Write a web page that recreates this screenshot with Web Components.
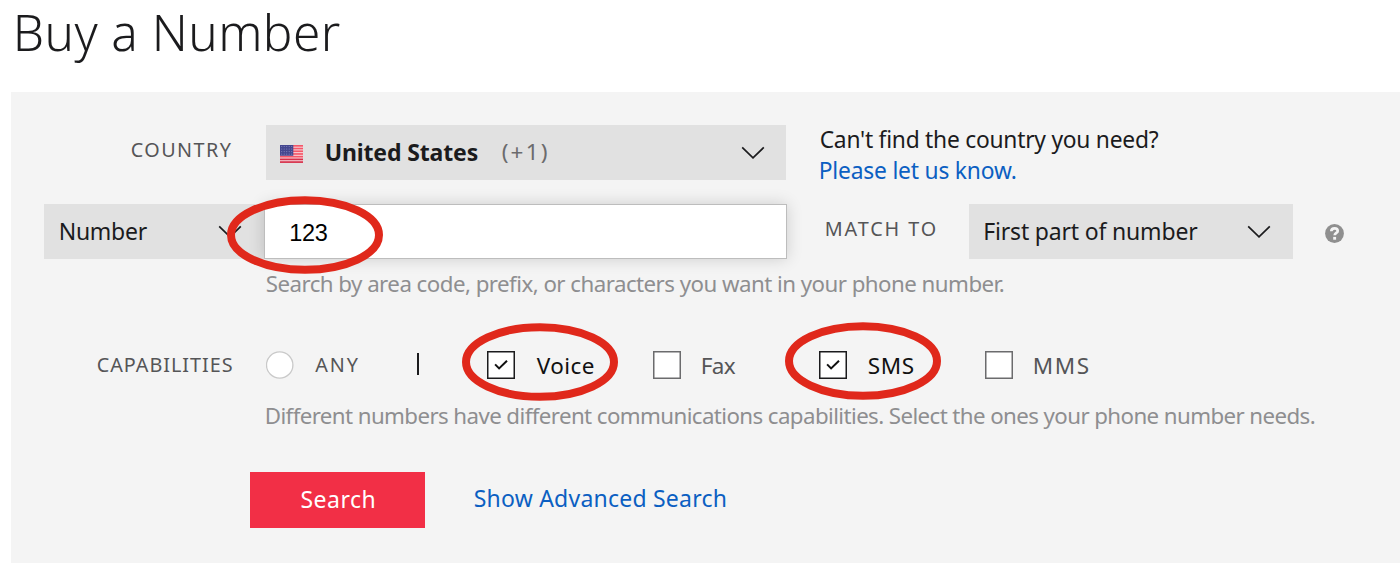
<!DOCTYPE html>
<html lang="en">
<head>
<meta charset="utf-8">
<title>Buy a Number</title>
<style>
html,body{margin:0;background:#fff}
body{font-family:"Noto Sans","Open Sans",sans-serif;color:#1b1b1d;height:563px;overflow:hidden}
</style>
</head>
<body>
<buy-number-page></buy-number-page>
<script>
const pen = document.createElement('canvas').getContext('2d');

// One line of text tracked to span a given width.
customElements.define('tracked-text', class extends HTMLElement {
  connectedCallback() {
    const a = n => this.getAttribute(n);
    const size = a('size') || 23, weight = a('weight') || 400, width = +a('width');
    const family = a('family') || '"Noto Sans","Open Sans",sans-serif';
    const text = this.textContent;
    pen.font = `${weight} ${size}px ${family}`;
    const m = pen.measureText(text);
    const ink = m.actualBoundingBoxLeft + m.actualBoundingBoxRight;
    const track = (width - ink) / (text.length - 1);
    this.attachShadow({mode: 'open'}).innerHTML = `<style>
      :host{display:block;flex:none;width:${width}px;height:30px;line-height:30px;white-space:nowrap;
        font-family:${family};font-size:${size}px;font-weight:${weight};letter-spacing:${track}px;
        font-variant-ligatures:none}
      span{display:block;margin-left:${m.actualBoundingBoxLeft + 0.7}px}
      </style><span><slot></slot></span>`;
  }
});

customElements.define('drop-down', class extends HTMLElement {
  connectedCallback() {
    this.attachShadow({mode: 'open'}).innerHTML = `<style>
      :host{display:flex;flex:none;box-sizing:border-box;align-items:center;justify-content:space-between;height:55px;background:#e1e1e1}
      .value{display:flex;align-items:center;margin-top:-2px}
      svg{display:block;flex:none}
      </style><div class="value"><slot></slot></div>
      <svg width="24" height="14" viewBox="0 0 24 14"><path d="M1.2 1.4 12 11.9 22.8 1.4" fill="none" stroke="#1b1b1d" stroke-width="1.7"/></svg>`;
  }
});

customElements.define('us-flag', class extends HTMLElement {
  connectedCallback() {
    let stripes = '';
    for (let i = 0; i < 7; i++) stripes += `<rect y="${i * 2.77}" width="23" height="1.7" fill="${i > 4 ? '#d5304a' : '#f4586a'}"/>`;
    let stars = '';
    for (let y = 0; y < 4; y++) for (let x = 0; x < 5; x++) stars += `<circle cx="${1.7 + x * 2.5}" cy="${1.5 + y * 2.6}" r=".6" fill="#8384bd"/>`;
    this.attachShadow({mode: 'open'}).innerHTML = `<style>:host{display:block;flex:none}svg{display:block}</style>
      <svg width="23" height="18" viewBox="0 0 23 18.4" preserveAspectRatio="none"><rect width="23" height="18.4" fill="#f8d3d9"/>${stripes}
      <rect width="13.3" height="11" fill="#44478f"/>${stars}</svg>`;
  }
});

customElements.define('check-box', class extends HTMLElement {
  connectedCallback() {
    const on = this.hasAttribute('checked'), radio = this.hasAttribute('radio');
    this.attachShadow({mode: 'open'}).innerHTML = `<style>
      :host{display:flex;flex:none;align-items:center;gap:${radio ? 20.5 : 21.5}px;color:${on ? '#111' : '#555557'}}
      svg{display:block;flex:none}
      </style><svg width="28" height="28" viewBox="0 0 28 28">
      ${radio ? '<circle cx="13.7" cy="14" r="13.2" fill="#fff" stroke="#c9c9c9" stroke-width="1.3"/>'
        : `<rect x=".75" y=".75" width="26.5" height="26.5" fill="#fff" stroke="${on ? '#1b1b1d' : '#6b6b6d'}" stroke-width="1.5"/>`}
      ${on ? '<path d="M8.1 13.4 12.1 17.4 20 9.7" fill="none" stroke="#111" stroke-width="2"/>' : ''}
      </svg><slot></slot>`;
  }
});

customElements.define('highlight-ring', class extends HTMLElement {
  connectedCallback() {
    this.attachShadow({mode: 'open'}).innerHTML = `<style>
      :host{display:block;position:absolute;z-index:2;width:156px;height:78px;pointer-events:none}
      svg{display:block}</style>
      <svg width="156" height="78" viewBox="0 0 156 78"><ellipse cx="78" cy="39" rx="74" ry="34.8" fill="none" stroke="#e0281b" stroke-width="8"/></svg>`;
  }
});

customElements.define('help-icon', class extends HTMLElement {
  connectedCallback() {
    this.attachShadow({mode: 'open'}).innerHTML = `<style>:host{display:block;flex:none}svg{display:block}</style>
      <svg width="19" height="19" viewBox="0 0 19 19"><circle cx="9.5" cy="9.5" r="9.4" fill="#8f8f8f"/>
      <path d="M6.3 7.2C6.4 5.2 7.8 4.4 9.6 4.4c1.8 0 3.1.9 3.1 2.5 0 2.1-3 2-3 4.4" fill="none" stroke="#f4f4f4" stroke-width="2.7"/>
      <rect x="8.2" y="12.9" width="2.9" height="2.8" fill="#f4f4f4"/></svg>`;
  }
});

customElements.define('buy-number-page', class extends HTMLElement {
  connectedCallback() {
    this.attachShadow({mode: 'open'}).innerHTML = `<style>
      :host{display:flex;flex-direction:column;height:563px}
      header{height:92px;box-sizing:border-box;padding:17px 0 0 16px}
      main{flex:1;margin-left:11px;background:#f4f4f4;padding-top:33px;box-sizing:border-box}
      .row{display:flex;align-items:center;height:55px}
      .label{color:#555557}
      .side{margin:5px 0 0 34px;display:grid;gap:1px}
      .link{color:#0b5fc2}
      .hint{color:#8e8e90;margin-left:255px}
      .number{margin-top:24px;padding-left:33px;position:relative}
      .field{box-sizing:border-box;width:523px;height:55px;background:#fff;border:1.5px solid #bdbdbd;
        box-shadow:0 0 15px rgba(0,0,0,.16);padding:12.5px 0 0 25px;color:#000}
      .caps{height:30px;margin-top:51px;padding-left:86px;position:relative}
      .bar{width:2px;height:22px;background:#1b1b1d;margin:0 68px 2px 58.5px}
      .actions{margin-top:41px;padding-left:238.5px;height:56px}
      .button{display:flex;align-items:center;justify-content:center;box-sizing:border-box;width:175.5px;height:55.5px;padding-bottom:2px;background:#f22f46;color:#fff}
    </style>
    <header><tracked-text size="49.5" weight="300" width="323">Buy a Number</tracked-text></header>
    <main>
      <div class="row">
        <tracked-text class="label" size="19.8" width="100" style="margin:-6px 34.5px 0 120px">COUNTRY</tracked-text>
        <drop-down style="width:520.5px;padding:0 21px 0 14.5px">
          <us-flag style="margin:5px 22px 0 0"></us-flag>
          <tracked-text size="23" weight="700" width="152">United States</tracked-text>
          <tracked-text size="22.5" width="45" style="margin-left:24px;color:#6b6b6d">(+1)</tracked-text>
        </drop-down>
        <div class="side">
          <tracked-text size="22.8" width="338">Can't find the country you need?</tracked-text>
          <tracked-text class="link" size="22.8" width="195">Please let us know.</tracked-text>
        </div>
      </div>
      <div class="row number">
        <drop-down style="width:219.5px;padding:0 21.5px 0 16px"><tracked-text width="87">Number</tracked-text></drop-down>
        <div class="field"><tracked-text size="23.5" width="37.5" family='"Liberation Sans",Arial,sans-serif'>123</tracked-text></div>
        <tracked-text class="label" size="19.8" width="110" style="margin:-5px 33.5px 0 38.5px">MATCH TO</tracked-text>
        <drop-down style="width:324px;padding:0 22px 0 16px"><tracked-text width="213">First part of number</tracked-text></drop-down>
        <help-icon style="margin:4px 0 0 32px"></help-icon>
        <highlight-ring style="left:216px;top:-8px"></highlight-ring>
      </div>
      <tracked-text class="hint" size="22.3" width="737" style="margin-top:10px">Search by area code, prefix, or characters you want in your phone number.</tracked-text>
      <div class="row caps">
        <tracked-text class="label" size="19.8" width="134" style="margin-right:35px">CAPABILITIES</tracked-text>
        <check-box radio><tracked-text size="19.8" width="43.5">ANY</tracked-text></check-box>
        <div class="bar"></div>
        <check-box checked><tracked-text size="22.5" width="57" style="margin-top:2px">Voice</tracked-text></check-box>
        <check-box style="margin-left:59.5px"><tracked-text size="22.5" width="33" style="margin-top:2px">Fax</tracked-text></check-box>
        <check-box checked style="margin-left:83.5px"><tracked-text size="22.5" width="45" style="margin-top:2px">SMS</tracked-text></check-box>
        <check-box style="margin-left:71.5px"><tracked-text size="22.5" width="54" style="margin-top:2px">MMS</tracked-text></check-box>
        <highlight-ring style="left:450.5px;top:-27.5px"></highlight-ring>
        <highlight-ring style="left:774px;top:-28.5px"></highlight-ring>
      </div>
      <tracked-text class="hint" size="22.3" width="1048" style="margin-top:21px">Different numbers have different communications capabilities. Select the ones your phone number needs.</tracked-text>
      <div class="row actions">
        <div class="button"><tracked-text width="73">Search</tracked-text></div>
        <tracked-text class="link" width="251" style="margin:-5px 0 0 49px">Show Advanced Search</tracked-text>
      </div>
    </main>`;
  }
});
</script>
</body>
</html>
